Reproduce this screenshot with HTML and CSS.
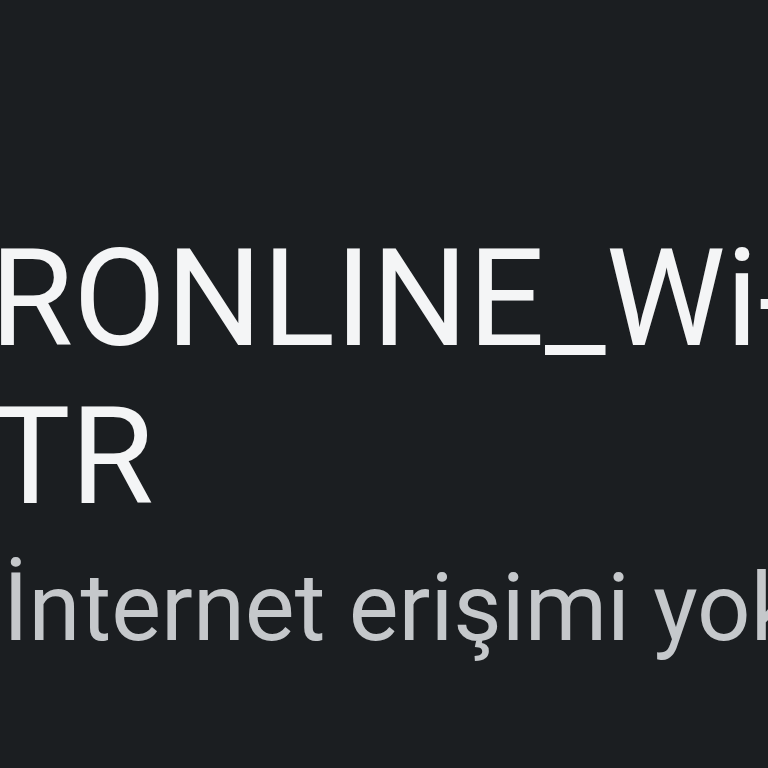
FILE: index.html
```html
<!DOCTYPE html>
<html lang="tr">
<head>
<meta charset="utf-8">
<link rel="stylesheet" href="styles.css">
</head>
<body>
<div class="screen">
  <div class="network">
    <div class="title">
      <span class="line">RONLINE_Wi-Fi</span>
      <span class="line">TR</span>
    </div>
    <div class="status">İnternet erişimi yok</div>
  </div>
</div>
</body>
</html>
```
FILE: styles.css
```css
html, body {
  margin: 0;
  padding: 0;
  background: #1b1e21;
  overflow: hidden;
}
.screen {
  width: 768px;
  height: 768px;
  overflow: hidden;
  background: #1b1e21;
  font-family: Roboto, "Noto Sans", sans-serif;
}
.network {
  padding-top: 220px;
}
.title {
  color: #f4f5f6;
  font-size: 135px;
  line-height: 158px;
  font-weight: 400;
  margin-left: -10px;
}
.line {
  display: block;
  white-space: nowrap;
}
.status {
  margin-top: 16px;
  color: #c5c8cb;
  font-size: 94px;
  line-height: 1.2;
  white-space: nowrap;
  margin-left: 3px;
}
```
